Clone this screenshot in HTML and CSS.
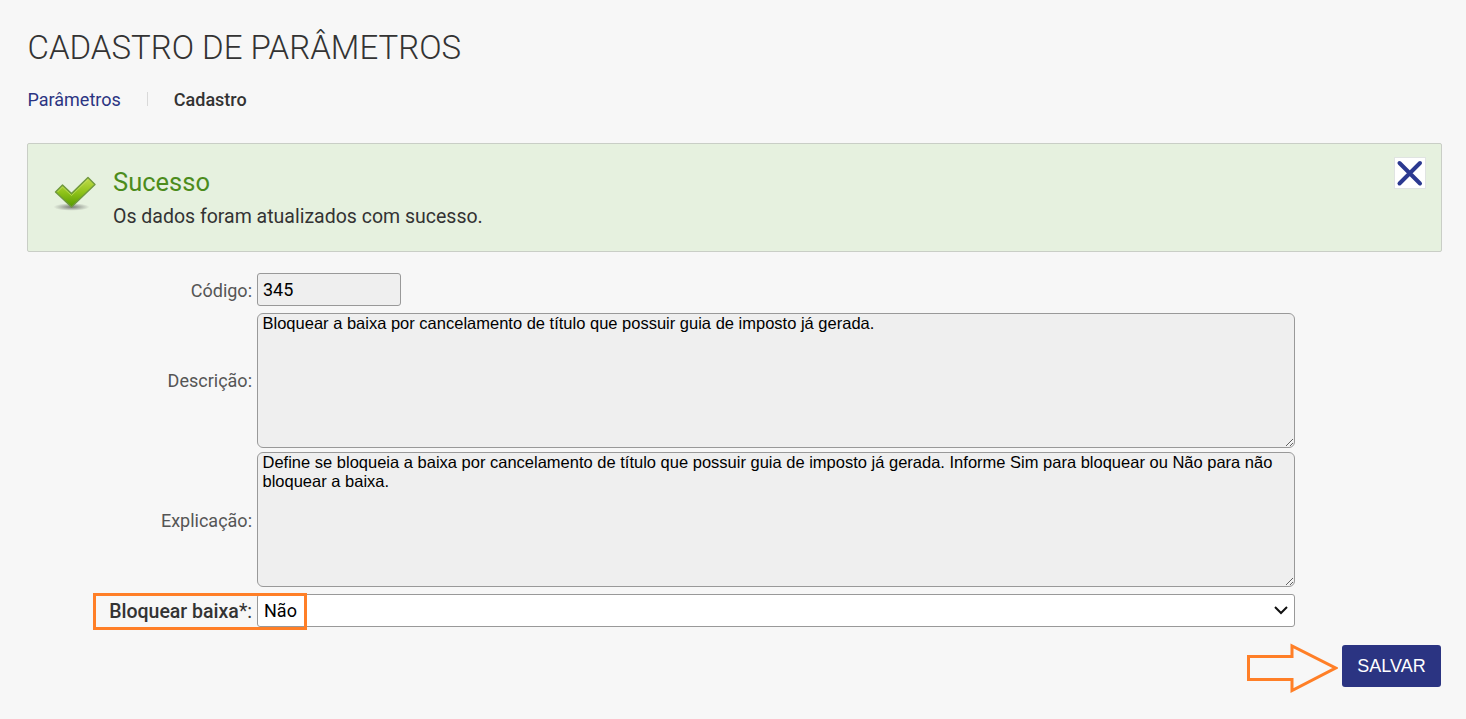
FILE: index.html
```html
<!DOCTYPE html>
<html lang="pt-BR">
<head>
    <meta charset="UTF-8">
    <meta name="viewport" content="width=device-width, initial-scale=1.0">
    <title>Cadastro de Parâmetros</title>
    <link rel="stylesheet" href="styles.css">
</head>
<body>

<div class="container">
    <h1>CADASTRO DE PARÂMETROS</h1>

    <nav class="abas">
        <a href="#" class="aba">Parâmetros</a>
        <span class="separador"></span>
        <span class="aba-ativa">Cadastro</span>
    </nav>

    <div class="mensagem">
        <svg class="icone-sucesso" width="44" height="38" viewBox="0 0 44 38">
            <defs>
                <linearGradient id="verde" x1="0" y1="0" x2="0" y2="1">
                    <stop offset="0" stop-color="#c3dc4c"/>
                    <stop offset="0.5" stop-color="#8fc31a"/>
                    <stop offset="1" stop-color="#569a00"/>
                </linearGradient>
                <radialGradient id="sombra">
                    <stop offset="0" stop-color="#555" stop-opacity="0.75"/>
                    <stop offset="1" stop-color="#555" stop-opacity="0"/>
                </radialGradient>
            </defs>
            <ellipse cx="17.5" cy="32" rx="18" ry="3.8" fill="url(#sombra)"/>
            <path d="M1.5 17 L8.5 10 L17.5 18.5 L34 2.5 L41 9.5 L17.5 32 Z" fill="url(#verde)" stroke="#6f983f" stroke-width="1.4" stroke-linejoin="round"/>
            <path d="M3.5 17 L8.5 12 L17.5 20.5 L34 4.5" fill="none" stroke="#cce475" stroke-width="1" opacity="0.6"/>
        </svg>
        <div class="mensagem-texto">
            <h2>Sucesso</h2>
            <p>Os dados foram atualizados com sucesso.</p>
        </div>
        <button class="fechar" aria-label="Fechar">
            <svg width="32" height="32" viewBox="0 0 32 32">
                <path d="M5.5 6 L26 26.5 M26 6 L5.5 26.5" stroke="#2b3990" stroke-width="4" stroke-linecap="round"/>
            </svg>
        </button>
    </div>

    <form class="formulario">
        <div class="linha linha-codigo">
            <label for="codigo">Código:</label>
            <input type="text" id="codigo" value="345" readonly>
        </div>
        <div class="linha">
            <label for="descricao">Descrição:</label>
            <textarea id="descricao" readonly>Bloquear a baixa por cancelamento de título que possuir guia de imposto já gerada.</textarea>
        </div>
        <div class="linha linha-explicacao">
            <label for="explicacao">Explicação:</label>
            <textarea id="explicacao" readonly>Define se bloqueia a baixa por cancelamento de título que possuir guia de imposto já gerada. Informe Sim para bloquear ou Não para não bloquear a baixa.</textarea>
        </div>
        <div class="linha linha-bloquear">
            <label for="bloquear"><b>Bloquear baixa</b>*:</label>
            <select id="bloquear">
                <option>Não</option>
                <option>Sim</option>
            </select>
            <svg class="chevron" width="14" height="10" viewBox="0 0 14 10">
                <path d="M1 2 L7 8 L13 2" fill="none" stroke="#111" stroke-width="2"/>
            </svg>
            <span class="destaque"></span>
        </div>
    </form>

    <div class="acoes">
        <svg width="92" height="50" viewBox="0 0 92 50">
            <path d="M2.5 13.5 H46 V3 L89.5 25 L46 47.5 V36.5 H2.5 Z" fill="none" stroke="#ff7f27" stroke-width="3"/>
        </svg>
        <button class="salvar">SALVAR</button>
    </div>
</div>

</body>
</html>
```
FILE: styles.css
```css
body {
    font-family: Roboto, sans-serif;
    background-color: #f7f7f7;
    color: #333;
    margin: 0;
}
.container {
    padding: 27px 24px 0 27px;
}
h1 {
    font-size: 33px;
    font-weight: 300;
    line-height: 42px;
    margin: 0 0 0 0.5px;
}
.abas {
    display: flex;
    align-items: center;
    height: 24px;
    margin: 18px 0 0 0.5px;
    font-size: 18px;
}
.aba {
    color: #2b3482;
    text-decoration: none;
}
.separador {
    width: 1px;
    height: 14px;
    margin: 0 26px;
    background-color: #d9d9d9;
}
.aba-ativa {
    font-weight: 500;
}
.mensagem {
    display: flex;
    align-items: flex-start;
    box-sizing: border-box;
    height: 109px;
    margin-top: 32px;
    padding-left: 26px;
    background-color: #e6f1df;
    border: 1px solid #c9cec6;
    border-radius: 2px;
}
.icone-sucesso {
    margin-top: 31px;
}
.mensagem-texto {
    flex: 1;
    margin: 21px 0 0 15px;
}
h2 {
    margin: 0;
    font-size: 25.5px;
    font-weight: 400;
    line-height: 34px;
    color: #4c8c1c;
}
.mensagem p {
    margin: 5px 0 0;
    font-size: 19.5px;
    line-height: 26px;
}
.fechar {
    width: 32px;
    height: 32px;
    margin: 13px 15px 0 0;
    padding: 0;
    border: 1px solid #e0e4e2;
    background-color: #fff;
}
.fechar svg {
    display: block;
    margin: -1px;
}
.formulario {
    margin-top: 21px;
}
.linha {
    display: flex;
    align-items: center;
    gap: 5px;
    margin-bottom: 4px;
}
.linha label {
    width: 225px;
    text-align: right;
    font-size: 18px;
    color: #555;
}
.linha input, .linha textarea, .linha select {
    box-sizing: border-box;
    margin: 0;
    border: 1px solid #999;
    background-color: #efefef;
    color: #000;
}
.linha input {
    width: 144px;
    height: 33px;
    padding: 0 5px;
    border-radius: 3px;
    font-family: Roboto, sans-serif;
    font-size: 18px;
}
.linha textarea {
    width: 1038px;
    height: 135px;
    padding: 0 4.5px;
    border-radius: 6px;
    font-family: "Liberation Sans", Arial, sans-serif;
    font-size: 16.5px;
    line-height: 19px;
}
.linha select {
    width: 1038px;
    height: 33px;
    padding: 0 6px;
    border-radius: 3px;
    background-color: #fff;
    font-family: Roboto, sans-serif;
    font-size: 18px;
    appearance: none;
}
.linha-codigo {
    margin-bottom: 7px;
}
.linha-codigo label, .linha-explicacao label {
    padding-top: 2px;
}
.linha-bloquear {
    position: relative;
    margin-top: 7px;
}
.linha-bloquear label {
    padding-top: 2px;
    font-size: 19.5px;
    color: #333;
}
.linha-bloquear b {
    font-weight: 500;
}
.chevron {
    position: absolute;
    top: 11px;
    left: 1247px;
    pointer-events: none;
}
.destaque {
    position: absolute;
    top: -1px;
    left: 66px;
    box-sizing: border-box;
    width: 214px;
    height: 37px;
    border: 3px solid #ff7f27;
    pointer-events: none;
}
.acoes {
    display: flex;
    justify-content: flex-end;
    align-items: flex-end;
    gap: 4px;
    margin: 16px 1px 0 0;
}
.salvar {
    width: 99px;
    height: 42px;
    margin-bottom: 6px;
    padding: 0;
    border: none;
    border-radius: 3px;
    background-color: #2b3482;
    color: #fff;
    font-family: "Liberation Sans", Arial, sans-serif;
    font-size: 18px;
}
```
